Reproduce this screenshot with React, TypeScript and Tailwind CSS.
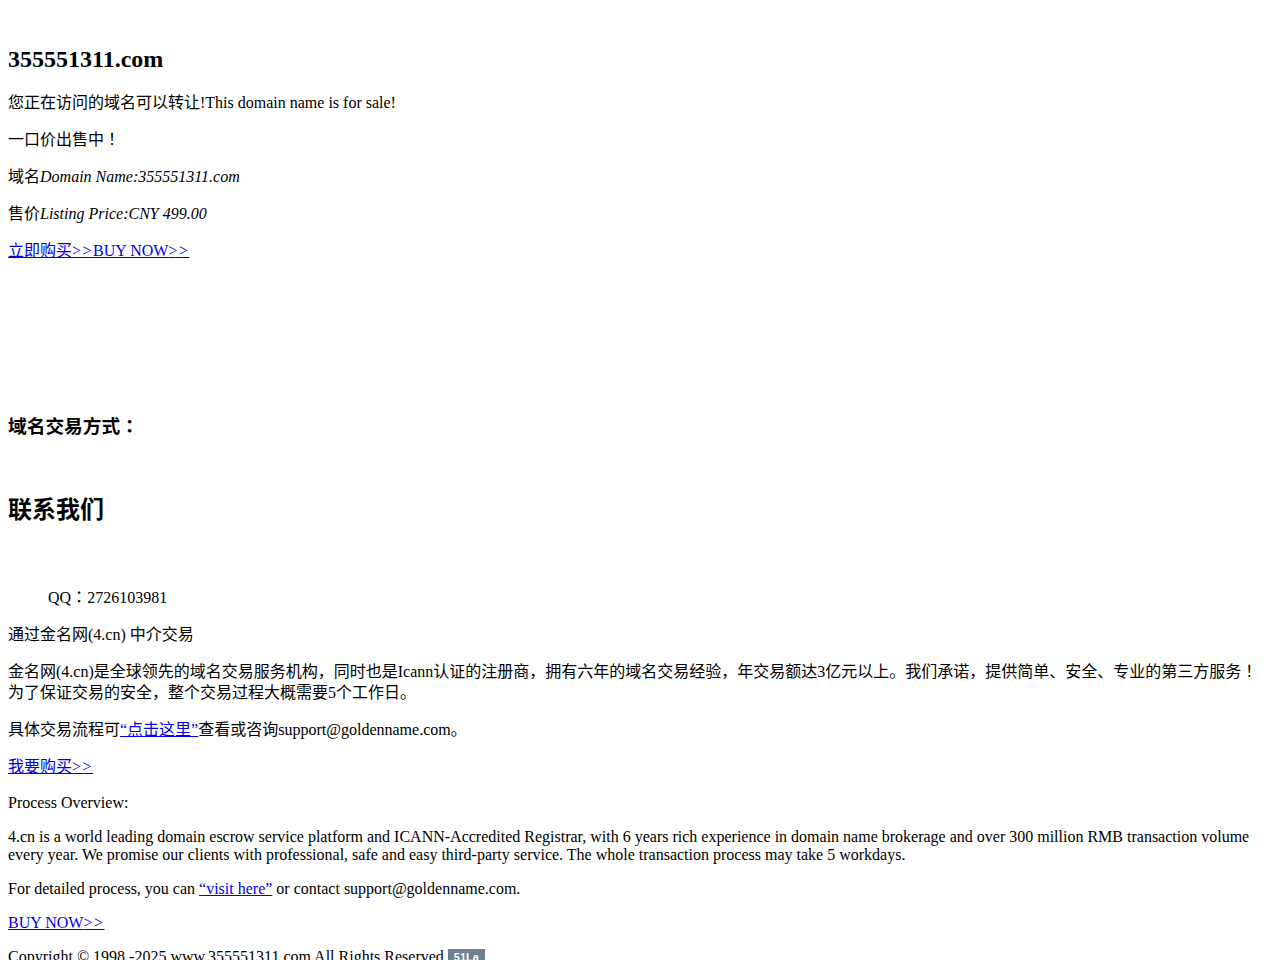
import React from 'react'

const serif = 'font-["Liberation_Serif","Noto_Sans_CJK_SC",serif]'

// 页面上的 ">>" 比 Times 的默认字宽稍宽
const Arrows = () => <span className="tracking-[1.5px]">&gt;&gt;</span>

// 全角 ！ ： 居中显示
const Mid = ({ children }: { children: React.ReactNode }) => (
  <span className='font-["Noto_Sans_CJK_TC",sans-serif] leading-none'>{children}</span>
)

export default function App() {
  return (
    <div className={`${serif} min-h-[960px] bg-white px-2 pt-[45px] text-[16px] text-black`}>
      {/* 标题 */}
      <h2 className="text-[24px] font-bold leading-[28px]">355551311.com</h2>

      <p className="mt-[19px] leading-[21px]">您正在访问的域名可以转让!This domain name is for sale!</p>
      <p className="mt-4 leading-[21px]">
        一口价出售中<Mid>！</Mid>
      </p>
      <p className="mt-4 leading-[21px]">
        域名<em>Domain Name:355551311.com</em>
      </p>
      <p className="mt-4 leading-[21px]">
        售价<em>Listing Price:CNY 499.00</em>
      </p>
      <p className="mt-4 leading-[21px]">
        <a href="#" className="text-[#0000ee] underline">
          立即购买<Arrows />BUY NOW<Arrows />
        </a>
      </p>

      {/* 交易方式 */}
      <h3 className="mt-[155px] text-[18.72px] font-bold leading-[22px]">
        域名交易方式<Mid>：</Mid>
      </h3>

      <h2 className="mt-[57px] text-[24px] font-bold leading-[31px]">联系我们</h2>

      <div className="mt-[61px] pl-10 leading-[21px]">
        QQ<Mid>：</Mid>2726103981
      </div>

      <p className="mt-4 leading-[21px]">通过金名网(4.cn) 中介交易</p>
      <p className="mt-4 leading-[21px]">
        金名网(4.cn)是全球领先的域名交易服务机构，同时也是Icann认证的注册商，拥有六年的域名交易经验，年交易额达3亿元以上。我们承诺，提供简单、安全、专业的第三方服务<Mid>！</Mid>为了保证交易的安全，整个交易过程大概需要5个工作日。
      </p>
      <p className="mt-4 leading-[21px]">
        具体交易流程可<a href="#" className="text-[#0000ee] underline">“点击这里”</a>查看或咨询support@goldenname.com。
      </p>
      <p className="mt-4 leading-[21px]">
        <a href="#" className="text-[#0000ee] underline">
          我要购买<Arrows />
        </a>
      </p>

      <p className="mt-[17px] leading-[18px]">Process Overview:</p>
      <p className="mt-4 leading-[18px]">
        4.cn is a world leading domain escrow service platform and ICANN-Accredited Registrar, with 6 years rich experience in domain name brokerage and over 300 million RMB transaction volume every year. We promise our clients with professional, safe and easy third-party service. The whole transaction process may take 5 workdays.
      </p>
      <p className="mt-4 leading-[18px]">
        For detailed process, you can <a href="#" className="text-[#0000ee] underline">“visit here”</a> or contact support@goldenname.com.
      </p>
      <p className="mt-4 leading-[18px]">
        <a href="#" className="text-[#0000ee] underline">
          BUY NOW<Arrows />
        </a>
      </p>

      <div className="mt-4 flex items-center leading-[18px]">
        <span>Copyright © 1998 -2025 www.355551311.com All Rights Reserved</span>
        <span className="ml-1 inline-block bg-[#6f8090] px-[6px] font-['Liberation_Sans',sans-serif] text-[11px] font-bold leading-[16px] text-white">
          51La
        </span>
      </div>
    </div>
  )
}
